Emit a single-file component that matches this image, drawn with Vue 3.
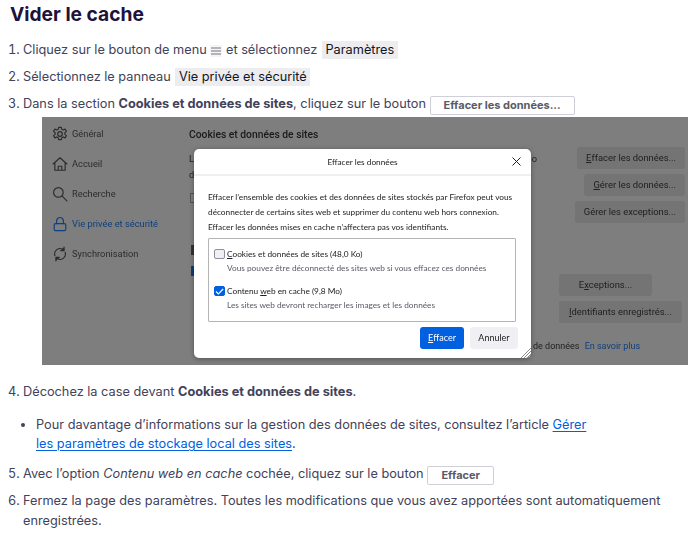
<script setup>
const sideItems = [
  { label: 'Général', icon: 'gear' },
  { label: 'Accueil', icon: 'home' },
  { label: 'Recherche', icon: 'search' },
  { label: 'Vie privée et sécurité', icon: 'lock', active: true },
  { label: 'Synchronisation', icon: 'sync' }
]
</script>

<template>
  <main class="page">
    <h2 class="title">Vider le cache</h2>
    <ol class="steps">
      <li>Cliquez sur le bouton de menu <span class="menu-chip"><svg width="10" height="8" viewBox="0 0 10 8"><path d="M0 1h10M0 4h10M0 7h10" stroke="#77777c" stroke-width="1.2" fill="none"/></svg></span> et sélectionnez <span class="chip">Paramètres</span></li>
      <li>Sélectionnez le panneau <span class="chip">Vie privée et sécurité</span></li>
      <li class="with-shot">Dans la section <strong>Cookies et données de sites</strong>, cliquez sur le bouton <span class="btn btn-wide">Effacer les données...</span>
        <div class="shot">
          <aside class="side">
            <div v-for="item in sideItems" :key="item.label" class="side-item" :class="{ active: item.active }">
              <svg class="side-icon" width="18" height="18" viewBox="0 0 18 18" fill="none" stroke="currentColor" stroke-width="1.3" stroke-linejoin="round" stroke-linecap="round">
                <template v-if="item.icon === 'gear'">
                  <circle cx="9" cy="9" r="2.6"/>
                  <path d="M7.5 1.5h3l.5 2.2 1.7.8 2-1.1 1.5 2.5-1.7 1.5v2l1.7 1.4-1.5 2.6-2-1.1-1.7.9-.5 2.2h-3l-.5-2.2-1.7-.9-2 1.1-1.5-2.6 1.7-1.4v-2L1.8 5.9l1.5-2.5 2 1.1 1.7-.8z"/>
                </template>
                <template v-else-if="item.icon === 'home'">
                  <path d="M1.2 9 9 2l7.8 7M3.2 7.8V16h11.6V7.8M7 16v-4.5h4V16"/>
                </template>
                <template v-else-if="item.icon === 'search'">
                  <circle cx="7.2" cy="7.2" r="5.4"/>
                  <path d="m11.2 11.2 5.6 5.6"/>
                </template>
                <template v-else-if="item.icon === 'lock'">
                  <rect x="2.5" y="8.5" width="13" height="8" rx="1.6"/>
                  <path d="M5.2 8.5V5.5a3.8 3.8 0 0 1 7.6 0v3"/>
                </template>
                <template v-else>
                  <path d="M3.3 11A6 6 0 0 1 12.6 4.2M14.7 7A6 6 0 0 1 5.4 13.8"/>
                  <path d="M13.6 1.3v3.9H9.8M4.4 16.7v-3.9h3.8" fill="currentColor"/>
                </template>
              </svg>
              <span>{{ item.label }}</span>
            </div>
          </aside>
          <section class="bg-main">
            <div class="bg-top">
              <div class="bg-left">
                <div class="bg-heading">Cookies et données de sites</div>
                <div class="bg-line"><span>L</span><span>o</span></div>
                <div class="bg-line"><span>d</span></div>
                <span class="bg-check"></span>
                <div class="bg-tick"></div>
                <div class="bg-tick blue"></div>
              </div>
              <div class="bg-right">
                <div class="bg-buttons">
                  <span class="bg-btn"><u>E</u>ffacer les données...</span>
                  <span class="bg-btn"><u>G</u>érer les données...</span>
                  <span class="bg-btn">Gérer les exceptions...</span>
                </div>
                <div class="bg-buttons-low">
                  <span class="bg-btn bg-exc">E<u>x</u>ceptions...</span>
                  <span class="bg-btn bg-ids"><u>I</u>dentifiants enregistrés...</span>
                </div>
              </div>
            </div>
            <div class="bg-foot">de données <span class="bg-link">En savoir plus</span></div>
          </section>
          <div class="dialog">
            <header class="dlg-head">
              <span>Effacer les données</span>
              <svg class="dlg-close" width="9" height="9" viewBox="0 0 9 9"><path d="m.5.5 8 8m0-8-8 8" stroke="#222" stroke-width="1" fill="none"/></svg>
            </header>
            <div class="dlg-body">
              <p class="dlg-text">Effacer l’ensemble des cookies et des données de sites stockés par Firefox peut vous<br>déconnecter de certains sites web et supprimer du contenu web hors connexion.<br>Effacer les données mises en cache n’affectera pas vos identifiants.</p>
              <div class="dlg-box">
                <div class="opt">
                  <span class="cb"></span>
                  <div>
                    <div class="opt-label"><u>C</u>ookies et données de sites (48,0 Ko)</div>
                    <div class="opt-sub">Vous pouvez être déconnecté des sites web si vous effacez ces données</div>
                  </div>
                </div>
                <div class="opt">
                  <span class="cb checked"><svg width="11" height="11" viewBox="0 0 11 11"><path d="m2 5.5 2.4 2.4L9.2 3" stroke="#fff" stroke-width="1.1" fill="none"/></svg></span>
                  <div>
                    <div class="opt-label">Contenu <u>w</u>eb en cache (9,8 Mo)</div>
                    <div class="opt-sub">Les sites web devront recharger les images et les données</div>
                  </div>
                </div>
              </div>
              <div class="dlg-actions">
                <span class="dlg-btn primary"><u>E</u>ffacer</span>
                <span class="dlg-btn">Annuler</span>
              </div>
            </div>
            <svg class="grip" width="11" height="11" viewBox="0 0 11 11"><path d="M11 1 1 11M11 4 4 11M11 7l-4 4M11 10l-1 1" stroke="#8a8a8a" stroke-width="1" fill="none"/></svg>
          </div>
        </div>
      </li>
      <li class="after-shot">Décochez la case devant <strong>Cookies et données de sites</strong>.
        <ul class="sub">
          <li>Pour davantage d’informations sur la gestion des données de sites, consultez l’article <a href="#" class="link">Gérer les paramètres de stockage local des sites</a>.</li>
        </ul>
      </li>
      <li class="step-five">Avec l’option <em>Contenu web en cache</em> cochée, cliquez sur le bouton <span class="btn btn-small">Effacer</span></li>
      <li>Fermez la page des paramètres. Toutes les modifications que vous avez apportées sont automatiquement enregistrées.</li>
    </ol>
  </main>
</template>

<style>
html, body { margin: 0; background: #fff; }
</style>

<style scoped>
.page {
  width: 695px;
  height: 533px;
  overflow: hidden;
  box-sizing: border-box;
  padding: 2px 0 0 10px;
  font-family: Inter, "Liberation Sans", sans-serif;
  font-size: 12.75px;
  line-height: 20px;
  color: #42425a;
  background: #fff;
}
.title {
  margin: 0 0 14px;
  font-size: 19.2px;
  line-height: 24px;
  font-weight: 700;
  color: #20123a;
}
.steps {
  margin: 0;
  padding: 0 0 0 13px;
  width: 665px;
}
.steps > li { margin-bottom: 7px; }
.steps > .with-shot { margin-bottom: 0; }
strong { font-weight: 700; }
.chip {
  display: inline-block;
  background: #ededf0;
  color: #15141a;
  padding: 0 3.5px;
  margin-left: 1px;
  line-height: 18px;
}
.menu-chip {
  display: inline-flex;
  align-items: center;
  justify-content: center;
  width: 12px;
  height: 12px;
  background: #f5f5f7;
  vertical-align: -1px;
}
.btn {
  display: inline-block;
  box-sizing: border-box;
  height: 19px;
  line-height: 17px;
  border: 1px solid #cfcfd8;
  border-radius: 2px;
  background: #fff;
  font-size: 11px;
  font-weight: 700;
  color: #5b5b66;
  text-align: center;
  vertical-align: -1px;
}
.btn-wide { width: 145px; }
.btn-small { width: 67px; }
.shot {
  position: relative;
  display: flex;
  margin: 2px 0 0 19px;
  width: 646px;
  height: 248px;
  background: #7e7e7e;
  font-family: Roboto, "Noto Sans", sans-serif;
  font-size: 9.3px;
  line-height: 12px;
  color: #222;
  overflow: hidden;
  filter: blur(0.3px);
}
.side {
  width: 147px;
  flex: none;
  box-sizing: border-box;
  padding: 2px 0 0 9px;
}
.side-item {
  display: flex;
  align-items: center;
  gap: 4px;
  height: 30px;
  color: #2c2c2c;
}
.side-item.active { color: #0f3f7c; }
.side-icon { flex: none; width: 16px; height: 16px; margin-left: 1px; }
.bg-main {
  flex: 1;
  min-width: 0;
  box-sizing: border-box;
  display: flex;
  flex-direction: column;
  padding: 9px 3px 0 0;
}
.bg-top { display: flex; height: 206px; }
.bg-left { width: 369px; flex: none; }
.bg-right { flex: 1; min-width: 0; padding-top: 21px; }
.bg-heading {
  font-weight: 500;
  font-size: 10.3px;
  line-height: 17px;
  height: 17px;
  color: #1a1a1a;
  white-space: nowrap;
}
.bg-line {
  display: flex;
  justify-content: space-between;
  width: 348px;
  line-height: 16px;
}
.bg-line:nth-child(2) { margin-top: 8px; }
.bg-check {
  display: block;
  box-sizing: border-box;
  width: 10px;
  height: 10px;
  margin: 10px 0 0 1px;
  border: 1px solid #555;
}
.bg-tick { width: 3px; height: 10px; margin: 42px 0 0 2px; background: #333; }
.bg-tick.blue { margin-top: 11px; background: #0f3f7c; }
.bg-buttons, .bg-buttons-low {
  display: flex;
  flex-direction: column;
  align-items: flex-end;
  gap: 5px;
}
.bg-buttons-low { margin-top: 51px; }
.bg-btn {
  display: inline-flex;
  align-items: center;
  justify-content: center;
  height: 22px;
  padding: 0 9px;
  border-radius: 3px;
  background: #747474;
  color: #202020;
  font-size: 9.4px;
  white-space: nowrap;
}
.bg-exc { width: 93px; padding: 0; box-sizing: border-box; margin-right: 33px; }
.bg-ids { margin-right: 3px; padding: 0 10px; }
.bg-foot { margin: 8px 0 0 344px; color: #222; font-size: 9px; white-space: nowrap; }
.bg-link { color: #0f3f7c; margin-left: 3px; }
.dialog {
  position: absolute;
  left: 152px;
  top: 32px;
  width: 337px;
  height: 209px;
  box-sizing: border-box;
  background: #fff;
  border-radius: 5px;
  box-shadow: 0 1px 5px rgba(0, 0, 0, .35);
  color: #222;
  font-family: Lato, Roboto, sans-serif;
  font-size: 8.27px;
}
.dlg-head {
  position: relative;
  display: flex;
  align-items: center;
  justify-content: center;
  height: 25px;
  border-bottom: 2px solid #efefef;
}
.dlg-close { position: absolute; right: 10px; top: 8px; }
.dlg-body {
  display: flex;
  flex-direction: column;
  padding: 14px 14px 0;
}
.dlg-text { margin: 0 0 3px; line-height: 15px; white-space: nowrap; }
.dlg-box {
  box-sizing: border-box;
  height: 84px;
  width: 308px;
  border: 1px solid #b4b4b4;
  border-radius: 1px;
  padding: 8px 5px 0;
}
.opt { display: flex; gap: 2px; height: 35px; }
.opt:first-child { margin-bottom: 2px; }
.opt-label { line-height: 14px; white-space: nowrap; }
.opt-sub { color: #5b5b66; line-height: 14px; white-space: nowrap; }
.cb {
  box-sizing: border-box;
  flex: none;
  width: 11px;
  height: 10px;
  margin-top: 2px;
  border: 1px solid #8f8f9d;
  background: #f0f0f4;
  border-radius: 2px;
  display: flex;
}
.cb.checked { background: #0060df; border-color: #0060df; }
.cb svg { margin: -1px; }
.dlg-actions {
  display: flex;
  gap: 6px;
  margin-top: 5px;
  width: 310px;
  justify-content: flex-end;
}
.dlg-btn {
  box-sizing: border-box;
  height: 22px;
  width: 48px;
  display: flex;
  align-items: center;
  justify-content: center;
  background: #f0f0f4;
  border-radius: 3px;
  color: #222;
  font-size: 9px;
}
.dlg-btn.primary { background: #0060df; color: #fff; width: 44px; }
.grip { position: absolute; right: 0; bottom: 0; }
.steps > .after-shot { margin-top: 17px; margin-bottom: 11px; }
.sub {
  margin: 13px 0 0;
  padding: 0 0 0 13px;
  width: 570px;
  list-style: disc;
}
.sub li { line-height: 19px; }
.steps > .step-five { margin-bottom: 6px; }
.link {
  color: #0060df;
  text-decoration: underline;
  text-underline-offset: 2px;
}
</style>
